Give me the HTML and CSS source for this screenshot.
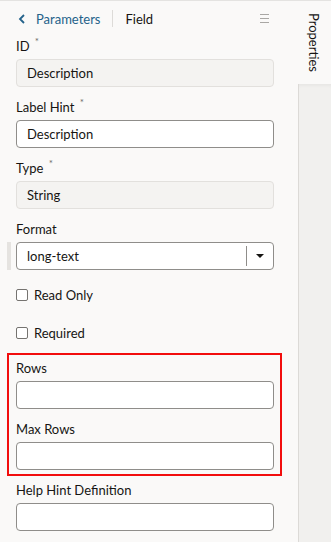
FILE: index.html
```html
<!DOCTYPE html>
<html lang="en">
<head>
  <meta charset="UTF-8" />
  <title>Field Properties</title>
  <link rel="stylesheet" href="styles.css">
</head>
<body>
  <div class="app">
    <div class="panel">
      <div class="header">
        <a class="back">
          <svg width="8" height="10" viewBox="0 0 8 10"><path d="M6 1 L2 5 L6 9" fill="none" stroke="#24628a" stroke-width="1.8"/></svg>
          Parameters
        </a>
        <span class="sep"></span>
        <span class="title">Field</span>
        <span class="menu"><i></i><i></i><i></i></span>
      </div>

      <div class="field">
        <div class="label">ID <sup>*</sup></div>
        <div class="input readonly">Description</div>
      </div>
      <div class="field">
        <div class="label">Label Hint <sup>*</sup></div>
        <div class="input">Description</div>
      </div>
      <div class="field">
        <div class="label">Type <sup>*</sup></div>
        <div class="input readonly">String</div>
      </div>
      <div class="field">
        <div class="label">Format</div>
        <div class="select-row">
          <span class="marker"></span>
          <div class="input select">
            <span class="value">long-text</span>
            <span class="arrow"></span>
          </div>
        </div>
      </div>

      <div class="checks">
        <label class="check"><span class="box"></span>Read Only</label>
        <label class="check"><span class="box"></span>Required</label>
      </div>

      <div class="highlight">
        <div class="field">
          <div class="label">Rows</div>
          <div class="input"></div>
        </div>
        <div class="field">
          <div class="label">Max Rows</div>
          <div class="input"></div>
        </div>
      </div>

      <div class="field">
        <div class="label">Help Hint Definition</div>
        <div class="input"></div>
      </div>
    </div>

    <div class="side">
      <div class="tab">Properties</div>
      <div class="rest"></div>
    </div>
  </div>
</body>
</html>
```

FILE: styles.css
```css
* { box-sizing: border-box; }
body {
  margin: 0;
  padding: 0;
  background: #faf9f8;
  font-family: Lato, "Noto Sans", sans-serif;
  font-size: 13px;
  color: #161513;
  border-top: 1px solid #e4e3e1;
  height: 542px;
  overflow: hidden;
}
.app {
  display: flex;
  height: 100%;
}
.panel {
  width: 298px;
  padding: 0 24px 0 16px;
  background: #faf9f8;
}
.header {
  display: flex;
  align-items: center;
  height: 35px;
}
.back {
  display: flex;
  align-items: center;
  gap: 10px;
  color: #24628a;
  font-size: 13px;
  margin-left: 2px;
}
.sep {
  width: 1px;
  height: 17px;
  background: #dddbd8;
  margin: 0 12px;
}
.title {
  font-size: 13px;
}
.menu {
  margin-left: auto;
  margin-right: 5px;
  display: flex;
  flex-direction: column;
  gap: 3px;
}
.menu i {
  display: block;
  width: 9px;
  height: 1px;
  background: #a9a7a4;
}
.field {
  margin-bottom: 10px;
}
.label {
  height: 20px;
  line-height: 20px;
  margin-bottom: 3px;
  font-size: 13px;
}
.label sup {
  font-size: 10px;
  line-height: 0;
  color: #6f6d6a;
  margin-left: 2px;
  vertical-align: 6px;
}
.input {
  height: 28px;
  border: 1px solid #8f8d8a;
  border-radius: 4px;
  background: #fff;
  padding: 0 10px;
  line-height: 26px;
  font-size: 13px;
}
.input.readonly {
  background: #f4f3f1;
  border-color: #e2e0dd;
}
.select-row {
  display: flex;
  margin-left: -9px;
}
.marker {
  width: 4px;
  background: #e5e3e0;
  margin-right: 5px;
}
.select {
  flex: 1;
  display: flex;
  align-items: center;
  padding-right: 0;
}
.select .value {
  flex: 1;
}
.arrow {
  width: 27px;
  height: 20px;
  border-left: 1px solid #8f8d8a;
  display: flex;
  align-items: center;
  justify-content: center;
}
.arrow::after {
  content: "";
  border-left: 4px solid transparent;
  border-right: 4px solid transparent;
  border-top: 4px solid #161513;
}
.checks {
  margin-top: -4px;
}
.check {
  display: flex;
  align-items: center;
  height: 38px;
  font-size: 13px;
}
.box {
  width: 12px;
  height: 12px;
  border: 1.5px solid #757370;
  border-radius: 2px;
  background: #fff;
  margin-right: 6px;
}
.highlight {
  margin: 1px -8px 4px -9px;
  padding: 3px 6px 4px 7px;
  border: 2px solid #f20d0d;
}
.highlight .field:last-child {
  margin-bottom: 0;
}
.side {
  flex: 1;
  display: flex;
  flex-direction: column;
}
.tab {
  height: 83px;
  background: #faf9f8;
  writing-mode: vertical-rl;
  font-size: 13px;
  padding-top: 12px;
  padding-right: 9px;
}
.rest {
  flex: 1;
  background: #f1f0ee;
  border-left: 1px solid #dcdad7;
  box-shadow: inset 0 4px 4px -3px rgba(0, 0, 0, 0.06);
}
```
